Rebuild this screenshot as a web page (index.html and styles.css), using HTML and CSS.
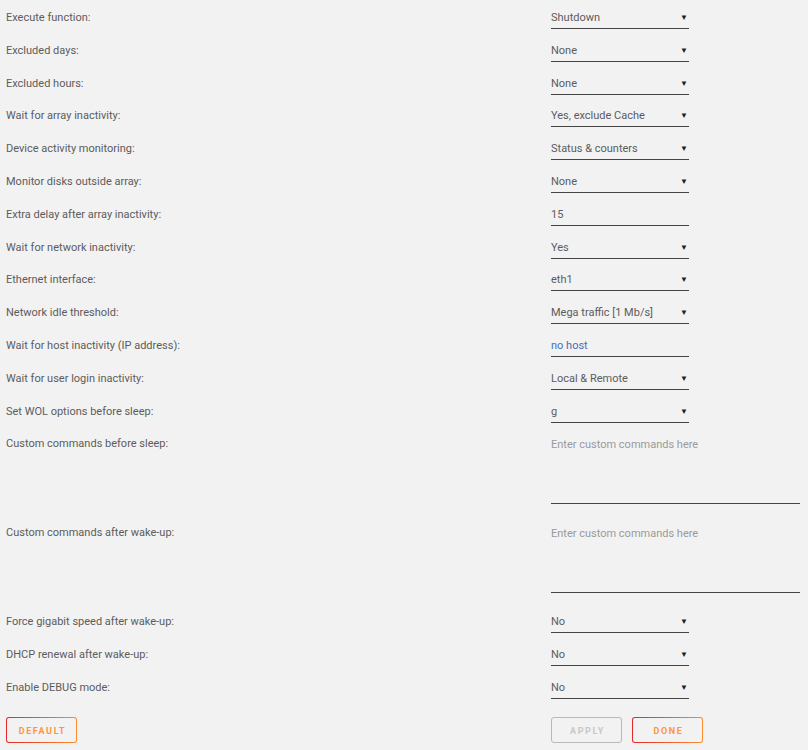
FILE: index.html
```html
<!DOCTYPE html>
<html>
<head>
<meta charset="utf-8">
<link rel="stylesheet" href="styles.css">
</head>
<body>
<div class="form">
  <div class="row"><div class="label">Execute function:</div><div class="control select"><span>Shutdown</span><span class="arrow">▼</span></div></div>
  <div class="row"><div class="label">Excluded days:</div><div class="control select"><span>None</span><span class="arrow">▼</span></div></div>
  <div class="row"><div class="label">Excluded hours:</div><div class="control select"><span>None</span><span class="arrow">▼</span></div></div>
  <div class="row"><div class="label">Wait for array inactivity:</div><div class="control select"><span>Yes, exclude Cache</span><span class="arrow">▼</span></div></div>
  <div class="row"><div class="label">Device activity monitoring:</div><div class="control select"><span>Status &amp; counters</span><span class="arrow">▼</span></div></div>
  <div class="row"><div class="label">Monitor disks outside array:</div><div class="control select"><span>None</span><span class="arrow">▼</span></div></div>
  <div class="row"><div class="label">Extra delay after array inactivity:</div><div class="control"><span>15</span></div></div>
  <div class="row"><div class="label">Wait for network inactivity:</div><div class="control select"><span>Yes</span><span class="arrow">▼</span></div></div>
  <div class="row"><div class="label">Ethernet interface:</div><div class="control select"><span>eth1</span><span class="arrow">▼</span></div></div>
  <div class="row"><div class="label">Network idle threshold:</div><div class="control select"><span>Mega traffic [1 Mb/s]</span><span class="arrow">▼</span></div></div>
  <div class="row"><div class="label">Wait for host inactivity (IP address):</div><div class="control"><span class="link">no host</span></div></div>
  <div class="row"><div class="label">Wait for user login inactivity:</div><div class="control select"><span>Local &amp; Remote</span><span class="arrow">▼</span></div></div>
  <div class="row"><div class="label">Set WOL options before sleep:</div><div class="control select"><span>g</span><span class="arrow">▼</span></div></div>
  <div class="row tall"><div class="label">Custom commands before sleep:</div><div class="control area"><span class="placeholder">Enter custom commands here</span></div></div>
  <div class="row tall"><div class="label">Custom commands after wake-up:</div><div class="control area"><span class="placeholder">Enter custom commands here</span></div></div>
  <div class="row"><div class="label">Force gigabit speed after wake-up:</div><div class="control select"><span>No</span><span class="arrow">▼</span></div></div>
  <div class="row"><div class="label">DHCP renewal after wake-up:</div><div class="control select"><span>No</span><span class="arrow">▼</span></div></div>
  <div class="row"><div class="label">Enable DEBUG mode:</div><div class="control select"><span>No</span><span class="arrow">▼</span></div></div>
  <div class="buttons">
    <div class="left"><button class="btn"><span class="btn-text">DEFAULT</span></button></div>
    <div class="right">
      <button class="btn disabled"><span class="btn-text">APPLY</span></button>
      <button class="btn"><span class="btn-text">DONE</span></button>
    </div>
  </div>
</div>
</body>
</html>
```
FILE: styles.css
```css
html, body {
  margin: 0;
  padding: 0;
  background: #f2f2f2;
}
body {
  font-family: Roboto, "Open Sans", sans-serif;
  font-size: 11px;
  color: #5c5c5c;
}
.form {
  padding-left: 6px;
  width: 802px;
}
.row {
  display: flex;
  align-items: flex-start;
  height: 32.8px;
  padding-top: 6px;
  box-sizing: border-box;
}
.row.tall {
  height: 89px;
}
.label {
  width: 545px;
  flex: none;
  line-height: 22px;
  padding-top: 1px;
}
.control {
  width: 138px;
  height: 20px;
  padding-top: 2px;
  line-height: 20px;
  border-bottom: 1px solid #454545;
  display: flex;
  justify-content: space-between;
  align-items: center;
}
.select .arrow {
  font-size: 8px;
  color: #1e1e1e;
  margin-right: 1px;
}
.link {
  color: #486dba;
}
.control.area {
  width: 249px;
  height: 68px;
  padding-top: 3px;
  align-items: flex-start;
}
.placeholder {
  color: #9a9a9a;
}
.buttons {
  display: flex;
  padding-top: 14px;
}
.left {
  width: 545px;
  flex: none;
}
.right {
  display: flex;
  gap: 10px;
}
.btn {
  width: 71px;
  height: 26px;
  margin: 0;
  padding: 2px 0 0 0;
  border: 1px solid transparent;
  border-radius: 3px;
  background: linear-gradient(#f2f2f2, #f2f2f2) padding-box,
              linear-gradient(90deg, #e22828, #ff8c2f) border-box;
  font-family: Roboto, "Open Sans", sans-serif;
  font-size: 9px;
  font-weight: 700;
  letter-spacing: 1.6px;
  box-sizing: border-box;
}
.btn-text {
  color: #ff963c;
  padding-left: 2px;
}
.btn.disabled {
  background: #f2f2f2;
  border: 1px solid #b8b8b8;
}
.btn.disabled .btn-text {
  color: #c8c8c8;
}
```
